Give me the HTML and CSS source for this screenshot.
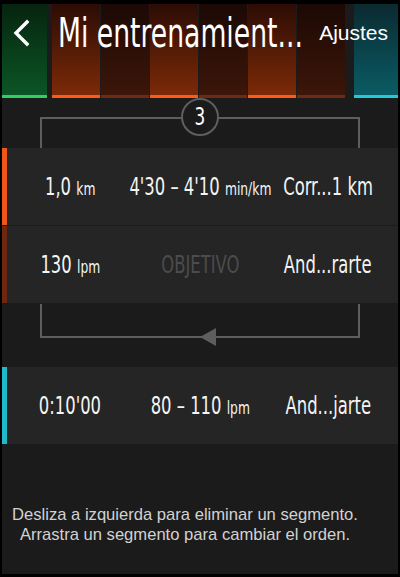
FILE: index.html
```html
<!DOCTYPE html>
<html lang="es">
<head>
<meta charset="utf-8">
<title>Mi entrenamiento</title>
<link rel="stylesheet" href="styles.css">
</head>
<body>
<div class="screen">
  <header class="header">
    <div class="bars">
      <div class="bar warm"></div>
      <div class="group">
        <div class="bar run"></div>
        <div class="bar rest"></div>
        <div class="bar run"></div>
        <div class="bar rest"></div>
        <div class="bar run"></div>
        <div class="bar rest"></div>
      </div>
      <div class="bar cool"></div>
    </div>
    <div class="topbar">
      <svg class="back" width="18" height="28" viewBox="0 0 18 28"><polyline points="15,3 4,14 15,25" fill="none" stroke="#fff" stroke-width="3.4" stroke-linecap="square"/></svg>
      <h1 class="title cond">Mi entrenamient...</h1>
      <span class="settings">Ajustes</span>
    </div>
  </header>

  <div class="repeat-top">
    <div class="bracket-top"><div class="badge"><span class="badge-num cond">3</span></div></div>
  </div>

  <div class="row">
    <div class="accent accent-run"></div>
    <div class="cells cond">
      <span class="cell">1,0 <small>km</small></span>
      <span class="cell">4'30 – 4'10 <small>min/km</small></span>
      <span class="cell">Corr...1 km</span>
    </div>
  </div>
  <div class="row">
    <div class="accent accent-rest"></div>
    <div class="cells cond">
      <span class="cell">130 <small>lpm</small></span>
      <span class="cell muted">OBJETIVO</span>
      <span class="cell">And...rarte</span>
    </div>
  </div>

  <div class="repeat-bottom">
    <div class="bracket-bottom"><span class="arrow"></span></div>
  </div>

  <div class="row">
    <div class="accent accent-cool"></div>
    <div class="cells cond">
      <span class="cell">0:10'00</span>
      <span class="cell">80 – 110 <small>lpm</small></span>
      <span class="cell">And...jarte</span>
    </div>
  </div>

  <p class="hint">Desliza a izquierda para eliminar un segmento.<br>Arrastra un segmento para cambiar el orden.</p>
</div>
</body>
</html>
```

FILE: styles.css
```css
html, body {
  margin: 0;
  padding: 0;
  background: #000;
}
body {
  padding: 4px 2px 3px 2px;
  width: 400px;
  height: 577px;
  box-sizing: border-box;
  overflow: hidden;
}
.screen {
  background: #1b1b1b;
  height: 570px;
  color: #f2f2f2;
  font-family: "Liberation Sans", Arial, sans-serif;
  overflow: hidden;
}
.cond {
  font-family: "DejaVu Sans Condensed", "DejaVu Sans", sans-serif;
  font-stretch: condensed;
}

/* header */
.header {
  display: grid;
  grid-template-columns: minmax(0, 1fr);
  height: 94px;
}
.bars, .topbar {
  grid-area: 1 / 1;
  min-width: 0;
}
.bars {
  display: flex;
  height: 94px;
}
.group {
  display: flex;
  gap: 1px;
  margin: 0 5px;
}
.bar {
  width: 48px;
  height: 94px;
  box-sizing: border-box;
  border-bottom: 3px solid;
}
.warm {
  width: 47px;
  background: linear-gradient(#06240f, #0b5526);
  border-color: #2fd063;
}
.run {
  background: linear-gradient(#2c0c04, #7c2a08);
  border-color: #ff5b17;
}
.rest {
  background: linear-gradient(#1c0905, #3c1609);
  border-color: #6e2a12;
}
.cool {
  width: 47px;
  margin-left: 4px;
  background: linear-gradient(#0a2a30, #0b5b64);
  border-color: #22c9d9;
}
.topbar {
  display: flex;
  align-items: center;
  height: 58px;
  padding: 0 10px 0 10px;
}
.back {
  display: block;
  flex: none;
  margin-right: 28px;
}
.title {
  margin: 0;
  font-weight: normal;
  font-size: 40px;
  line-height: 1;
  flex: 1 1 0;
  min-width: 0;
  white-space: nowrap;
  color: #fff;
  transform: scaleX(0.74);
  transform-origin: left center;
}
.settings {
  flex: none;
  font-size: 21px;
  color: #fff;
}

/* repeat brackets */
.repeat-top {
  height: 50px;
  padding: 19px 38px 0;
  box-sizing: border-box;
}
.bracket-top {
  height: 31px;
  border: 2px solid #5e5e5e;
  border-bottom: none;
  display: flex;
  justify-content: center;
  box-sizing: border-box;
}
.badge {
  width: 38px;
  height: 38px;
  box-sizing: border-box;
  margin-top: -21px;
  border: 2px solid #5e5e5e;
  border-radius: 50%;
  background: #1b1b1b;
  display: flex;
  align-items: center;
  justify-content: center;
}
.badge-num {
  font-size: 24px;
  color: #fff;
  transform: scaleX(0.78);
}
.repeat-bottom {
  height: 63px;
  padding: 0 38px;
  box-sizing: border-box;
}
.bracket-bottom {
  position: relative;
  height: 32px;
  border: 2px solid #5e5e5e;
  border-top: none;
}
.arrow {
  position: absolute;
  left: 50%;
  bottom: -10px;
  width: 0;
  height: 0;
  border-top: 9px solid transparent;
  border-bottom: 9px solid transparent;
  border-right: 16px solid #5e5e5e;
}

/* rows */
.row {
  display: flex;
  height: 77px;
  background: #252525;
  margin-bottom: 1px;
}
.accent {
  width: 5px;
}
.accent-run { background: #f0561a; }
.accent-rest { background: #6e2812; }
.accent-cool { background: #1fb9c9; }
.cells {
  display: grid;
  grid-template-columns: 126px 134px 122px;
  align-items: center;
  font-size: 24px;
  color: #f4f4f4;
}
.cell {
  justify-self: center;
  white-space: nowrap;
  transform: scaleX(0.76);
}
.cell small {
  font-size: 18px;
}
.muted {
  color: #4c4c4c;
}

/* hint */
.hint {
  margin: 61px 30px 0 0;
  text-align: center;
  font-size: 16.6px;
  line-height: 20px;
  color: #d2d2d2;
}
```
